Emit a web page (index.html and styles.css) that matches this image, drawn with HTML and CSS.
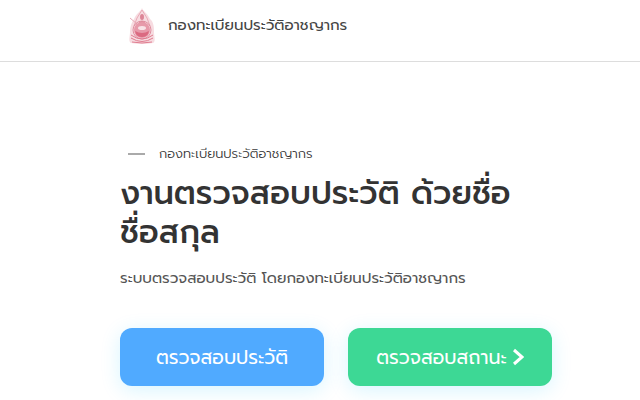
FILE: index.html
```html
<!DOCTYPE html>
<html lang="th">
<head>
    <meta charset="UTF-8">
    <meta name="viewport" content="width=device-width, initial-scale=1.0">
    <title>กองทะเบียนประวัติอาชญากร</title>
    <link rel="stylesheet" href="styles.css">
</head>
<body>
    <header class="navbar">
        <a class="brand" href="#">
            <svg class="brand-logo" viewBox="0 0 28 38" aria-hidden="true">
                <!-- flame shaped frame -->
                <path d="M14 2 C15 5 20 8 22 13 C26 16 26 22 26 26 C26 31 28 35 25 37 Q14 39 3 37 C0 35 2 31 2 26 C2 22 3 17 6 13 C8 8 13 5 14 2 Z" fill="#f7dce1"/>
                <path d="M14 4 L9 12 L6 20 M14 4 L19 12 L22 20 M2 12 L9 18" fill="none" stroke="#e9aab7" stroke-width="1"/>
                <!-- figure and orb -->
                <ellipse cx="14" cy="11" rx="2" ry="3" fill="#dd8597"/>
                <path d="M9 19 Q14 11 19 19 Z" fill="#dd8597"/>
                <circle cx="14" cy="24" r="8" fill="#e79aaa"/>
                <circle cx="14" cy="24" r="9" fill="none" stroke="#e08fa0" stroke-width="1"/>
                <ellipse cx="14" cy="22" rx="4" ry="2" fill="#f8e3e7"/>
                <path d="M7 25 Q14 29 21 25 Q20 31 14 31 Q8 31 7 25 Z" fill="#db6a81"/>
                <!-- base -->
                <path d="M3 29 Q14 37 25 29 M3 32 Q14 39 25 32 M4 36 Q14 38 24 36" fill="none" stroke="#e07c90" stroke-width="1"/>
            </svg>
            <span>กองทะเบียนประวัติอาชญากร</span>
        </a>
    </header>

    <main class="hero">
        <p class="hero-label">กองทะเบียนประวัติอาชญากร</p>
        <h1>งานตรวจสอบประวัติ ด้วยชื่อ ชื่อสกุล</h1>
        <p class="hero-text">ระบบตรวจสอบประวัติ โดยกองทะเบียนประวัติอาชญากร</p>
        <div class="hero-actions">
            <button type="button" class="btn btn-blue">ตรวจสอบประวัติ</button>
            <button type="button" class="btn btn-green">ตรวจสอบสถานะ
                <svg class="btn-icon" viewBox="0 0 11 18" aria-hidden="true"><path d="M1 2 L9 9 L1 16"/></svg>
            </button>
        </div>
    </main>
</body>
</html>
```
FILE: styles.css
```css
body {
    margin: 0;
    font-family: Prompt, "Noto Sans Thai", "Noto Sans", sans-serif;
    background-color: #fff;
    color: #333;
}
.navbar {
    padding: 6px 120px 17px;
    border-bottom: 1px solid #ddd;
}
.brand {
    display: flex;
    align-items: center;
    gap: 12px;
    padding-left: 8px;
    font-size: 15px;
    line-height: 24px;
    color: #444;
    text-decoration: none;
}
.brand-logo {
    width: 28px;
    height: 38px;
}
.hero {
    padding: 80px 80px 16px 120px;
}
.hero-label {
    display: flex;
    align-items: center;
    gap: 14px;
    margin: 0;
    padding-left: 8px;
    font-size: 13px;
    font-weight: 300;
    line-height: 24px;
}
.hero-label::before {
    content: "";
    width: 17px;
    height: 2px;
    background-color: #aaa;
}
h1 {
    margin: 8px 0 14px;
    font-size: 32px;
    font-weight: 500;
    line-height: 39px;
}
.hero-text {
    margin: 0 0 38px;
    font-size: 15px;
    line-height: 24px;
    color: #555;
}
.hero-actions {
    display: flex;
    gap: 24px;
}
.btn {
    display: flex;
    align-items: center;
    justify-content: center;
    gap: 6px;
    width: 204px;
    height: 58px;
    border: none;
    border-radius: 12px;
    box-shadow: 0 4px 20px rgba(0, 190, 255, 0.16);
    font-family: inherit;
    font-size: 19px;
    color: #fff;
}
.btn-blue {
    background-color: #50aaff;
}
.btn-green {
    background-color: #3dd895;
}
.btn-icon {
    width: 11px;
    height: 18px;
    fill: none;
    stroke: #fff;
    stroke-width: 3;
}
```
